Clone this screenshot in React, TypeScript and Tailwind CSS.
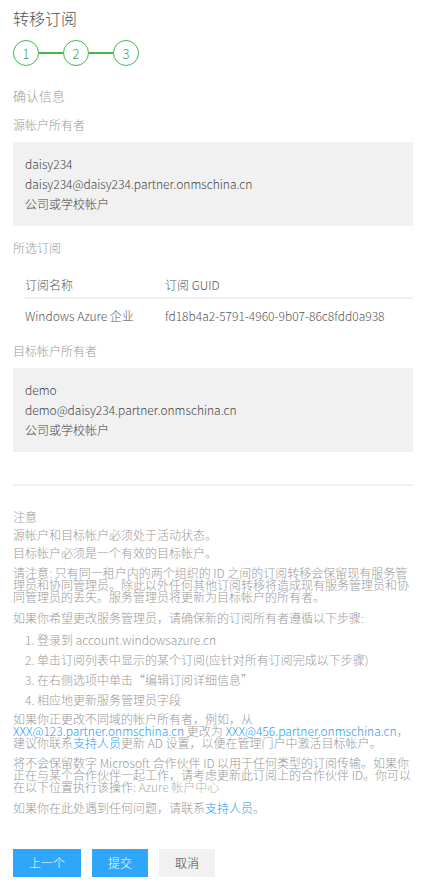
import React from "react";

const F = { fontFamily: '"Noto Sans CJK SC", sans-serif' };

function Step({ n }: { n: number }) {
  return (
    <div className="w-[26px] h-[26px] rounded-full border-[1.5px] border-[#46b653] flex items-center justify-center text-[13px] leading-none text-[#3f9f5c]">
      {n}
    </div>
  );
}

function Box({ lines }: { lines: string[] }) {
  return (
    <div className="mt-[8px] bg-[#f1f1f1] py-[12px] px-[12px] text-[12px] leading-[20px] text-[#444]">
      {lines.map((l) => (
        <div key={l}>{l}</div>
      ))}
    </div>
  );
}

const link = "text-[#2a9df4]";

export default function App() {
  return (
    <div style={F} className="w-[427px] min-h-[889px] bg-white font-light">
      <div className="ml-[13px] w-[400px] pt-[7px] pb-[12px]">
        <div className="text-[16px] leading-[22px] text-[#505050]">转移订阅</div>
        <div className="mt-[11px] flex items-center">
          <Step n={1} />
          <div className="w-[24px] h-[1.5px] bg-[#46b653]" />
          <Step n={2} />
          <div className="w-[24px] h-[1.5px] bg-[#46b653]" />
          <Step n={3} />
        </div>

        <div className="mt-[21px] text-[13px] leading-[18px] text-[#9a9a9a]">确认信息</div>
        <div className="mt-[11px] text-[12px] leading-[18px] text-[#9a9a9a]">源帐户所有者</div>
        <Box lines={["daisy234", "daisy234@daisy234.partner.onmschina.cn", "公司或学校帐户"]} />

        <div className="mt-[13px] text-[12px] leading-[18px] text-[#9a9a9a]">所选订阅</div>
        <div className="ml-[12px] text-[12px] text-[#555]">
          <div className="mt-[19px] h-[23px] flex border-b-2 border-[#f0f0f0] leading-[18px]">
            <div className="w-[140px]">订阅名称</div>
            <div>订阅 GUID</div>
          </div>
          <div className="pt-[8px] flex leading-[18px]">
            <div className="w-[140px]">Windows Azure 企业</div>
            <div>fd18b4a2-5791-4960-9b07-86c8fdd0a938</div>
          </div>
        </div>

        <div className="mt-[17px] text-[12px] leading-[18px] text-[#9a9a9a]">目标帐户所有者</div>
        <Box lines={["demo", "demo@daisy234.partner.onmschina.cn", "公司或学校帐户"]} />

        <div className="mt-[32px] h-[2px] bg-[#f0f0f0]" />

        <div className="mt-[22px] text-[12px] text-[#999]">
          <div className="leading-[18px]">注意</div>
          <div className="leading-[18px]">源帐户和目标帐户必须处于活动状态。</div>
          <div className="leading-[18px]">目标帐户必须是一个有效的目标帐户。</div>
          <div className="mt-[5px] leading-[12px]">
            <div className="whitespace-nowrap">请注意: 只有同一租户内的两个组织的 ID 之间的订阅转移会保留现有服务管</div>
            <div className="whitespace-nowrap">理员和协同管理员。除此以外任何其他订阅转移将造成现有服务管理员和协</div>
            <div className="whitespace-nowrap">同管理员的丢失。服务管理员将更新为目标帐户的所有者。</div>
          </div>
          <div className="mt-[9px] leading-[12px]">如果你希望更改服务管理员，请确保新的订阅所有者遵循以下步骤:</div>
          <div className="mt-[6px] pl-[12px] leading-[20px]">
            <div>1. 登录到 account.windowsazure.cn</div>
            <div>2. 单击订阅列表中显示的某个订阅(应针对所有订阅完成以下步骤)</div>
            <div>3. 在右侧选项中单击“编辑订阅详细信息”</div>
            <div>4. 相应地更新服务管理员字段</div>
          </div>
          <div className="mt-[3px] leading-[12px]">
            <div className="whitespace-nowrap">如果你正更改不同域的帐户所有者，例如，从</div>
            <div className="whitespace-nowrap">
              <span className={link}>XXX@123.partner.onmschina.cn</span> 更改为{" "}
              <span className={link}>XXX@456.partner.onmschina.cn</span>，
            </div>
            <div className="whitespace-nowrap">
              建议你联系<span className={link}>支持人员</span>更新 AD 设置，以便在管理门户中激活目标帐户。
            </div>
          </div>
          <div className="mt-[8px] leading-[12px]">
            <div className="whitespace-nowrap">将不会保留数字 Microsoft 合作伙伴 ID 以用于任何类型的订阅传输。如果你</div>
            <div className="whitespace-nowrap">正在与某个合作伙伴一起工作，请考虑更新此订阅上的合作伙伴 ID。你可以</div>
            <div className="whitespace-nowrap">
              在以下位置执行该操作: <span className="text-[#b0b0b0]">Azure 帐户中心</span>
            </div>
          </div>
          <div className="mt-[9px] leading-[12px]">
            如果你在此处遇到任何问题，请联系<span className={link}>支持人员</span>。
          </div>
        </div>

        <div className="mt-[35px] flex gap-[11px] text-[12px]">
          <button className="w-[68px] h-[28px] bg-[#2ea7fb] text-white">上一个</button>
          <button className="w-[56px] h-[28px] bg-[#2ea7fb] text-white">提交</button>
          <button className="w-[56px] h-[28px] bg-[#f1f1f1] text-[#444]">取消</button>
        </div>
      </div>
    </div>
  );
}
